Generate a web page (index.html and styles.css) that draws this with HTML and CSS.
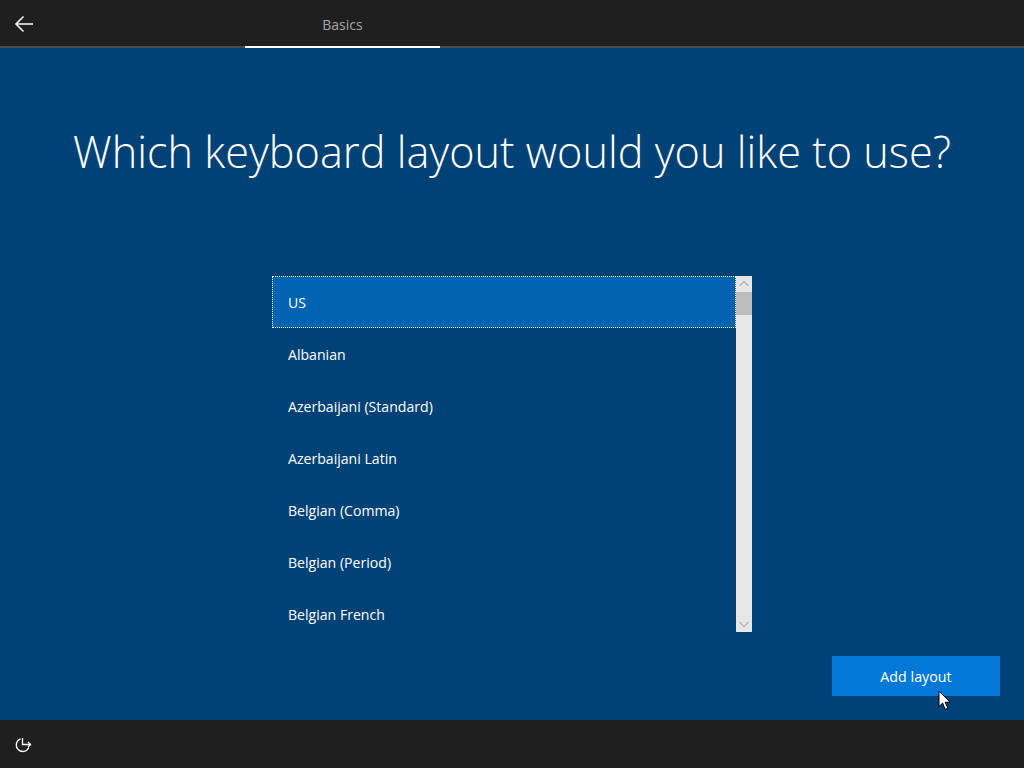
FILE: index.html
```html
<!DOCTYPE html>
<html lang="en">
<head>
    <meta charset="UTF-8">
    <meta name="viewport" content="width=device-width, initial-scale=1.0">
    <title>Basics - Keyboard layout</title>
    <link rel="stylesheet" href="styles.css">
</head>
<body>
    <header class="topbar">
        <button class="back-btn" aria-label="Back">
            <svg width="20" height="18" viewBox="0 0 20 18" fill="none" stroke="#f2f2f2" stroke-width="1.6">
                <path d="M19 9H2"/>
                <path d="M9.5 1.5L2 9l7.5 7.5"/>
            </svg>
        </button>
        <div class="tab">Basics</div>
    </header>

    <main class="content">
        <h1>Which keyboard layout would you like to use?</h1>
        <div class="listbox">
            <ul class="options">
                <li class="option selected">US</li>
                <li class="option">Albanian</li>
                <li class="option">Azerbaijani (Standard)</li>
                <li class="option">Azerbaijani Latin</li>
                <li class="option">Belgian (Comma)</li>
                <li class="option">Belgian (Period)</li>
                <li class="option">Belgian French</li>
            </ul>
            <div class="scrollbar">
                <svg class="arrow" width="16" height="16" viewBox="0 0 16 16" fill="none" stroke="#8a8a8a" stroke-width="1">
                    <path d="M3.5 10L8 5.5l4.5 4.5"/>
                </svg>
                <div class="thumb"></div>
                <div class="track"></div>
                <svg class="arrow" width="16" height="16" viewBox="0 0 16 16" fill="none" stroke="#8a8a8a" stroke-width="1">
                    <path d="M3.5 6L8 10.5 12.5 6"/>
                </svg>
            </div>
        </div>
        <div class="actions">
            <button class="add-btn">Add layout</button>
        </div>
        <svg class="pointer" width="14" height="21" viewBox="0 0 14 21">
            <path d="M1 1v15.5l3.6-3.4 2.6 6.2 2.6-1.1-2.6-6h5z" fill="#fff" stroke="#000" stroke-width="1"/>
        </svg>
    </main>

    <footer class="bottombar">
        <svg class="ease-icon" width="17" height="16" viewBox="0 0 17 16" fill="none" stroke="#fff" stroke-width="1.3">
            <path d="M5.5 1.9A6.5 6.5 0 1 0 13.8 10.5"/>
            <path d="M7.5 1v6.5h8"/>
            <path d="M13 5l2.5 2.5L13 10"/>
        </svg>
    </footer>
</body>
</html>
```

FILE: styles.css
```css
* {
    box-sizing: border-box;
}

body {
    font-family: "Open Sans", "Liberation Sans", sans-serif;
    margin: 0;
    height: 768px;
    overflow: hidden;
    display: flex;
    flex-direction: column;
    background-color: #004275;
    color: #fff;
}

/* Top bar */
.topbar {
    height: 48px;
    display: flex;
    background-color: #1f1f1f;
    border-bottom: 2px solid #4a4a4a;
}

.back-btn {
    width: 48px;
    height: 48px;
    padding: 0;
    background: none;
    border: none;
    display: flex;
    align-items: center;
    justify-content: center;
}

.tab {
    width: 195px;
    height: 48px;
    margin-left: 197px;
    padding-top: 2px;
    border-bottom: 2px solid #fff;
    display: flex;
    align-items: center;
    justify-content: center;
    font-size: 14px;
    color: #a6a6a6;
}

/* Main area */
.content {
    flex: 1;
    position: relative;
    display: flex;
    flex-direction: column;
}

h1 {
    margin: 72px 0 0;
    height: 64px;
    line-height: 64px;
    text-align: center;
    font-size: 43.25px;
    font-weight: 300;
}

.listbox {
    width: 480px;
    height: 356px;
    margin: 92px 0 0 272px;
    display: flex;
}

.options {
    flex: 1;
    margin: 0;
    padding: 0;
    list-style: none;
    overflow: hidden;
}

.option {
    height: 52px;
    padding-left: 16px;
    display: flex;
    align-items: center;
    font-size: 14.1px;
    color: #fff;
}

.option.selected {
    background-color: #0063b1;
    outline: 1px dotted #fff;
    outline-offset: -1px;
}

.scrollbar {
    width: 16px;
    display: flex;
    flex-direction: column;
    background-color: #e6e6e6;
}

.arrow {
    flex: none;
}

.thumb {
    height: 23px;
    background-color: #bdbdbd;
}

.track {
    flex: 1;
}

.actions {
    display: flex;
    justify-content: flex-end;
    padding: 24px 24px 0 0;
}

.add-btn {
    width: 168px;
    height: 40px;
    border: none;
    background-color: #0078d7;
    color: #fff;
    font-family: inherit;
    font-size: 14.3px;
}

.pointer {
    position: absolute;
    left: 938px;
    top: 642px;
}

/* Bottom bar */
.bottombar {
    height: 48px;
    padding: 2px 0 0 15px;
    display: flex;
    align-items: center;
    background-color: #1f1f1f;
}
```
